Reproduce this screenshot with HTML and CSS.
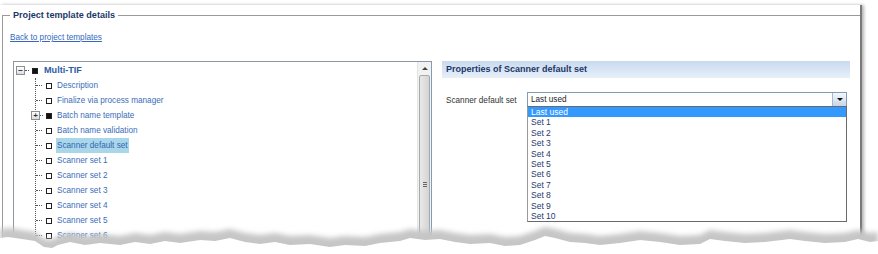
FILE: index.html
```html
<!doctype html>
<html lang="en">
  <head>
    <meta charset="UTF-8" />
    <title>Project template details</title>
    <link rel="stylesheet" href="styles.css">
  </head>
  <body>
    <div class="paper">
      <fieldset class="details">
        <legend>Project template details</legend>
        <a class="back" href="#">Back to project templates</a>

        <div class="main">
          <!-- Tree of template items -->
          <div class="tree-panel">
            <div class="tree">
              <div class="row root">
                <span class="expander">&minus;</span>
                <span class="conn short"></span>
                <span class="sq filled"></span>
                <span class="label bold">Multi-TIF</span>
              </div>
              <div class="children">
                <div class="row"><span class="conn"></span><span class="sq"></span><span class="label">Description</span></div>
                <div class="row"><span class="conn"></span><span class="sq"></span><span class="label">Finalize via process manager</span></div>
                <div class="row"><span class="expander on-line">+</span><span class="conn tiny"></span><span class="sq filled"></span><span class="label">Batch name template</span></div>
                <div class="row"><span class="conn"></span><span class="sq"></span><span class="label">Batch name validation</span></div>
                <div class="row"><span class="conn"></span><span class="sq"></span><span class="label selected">Scanner default set</span></div>
                <div class="row"><span class="conn"></span><span class="sq"></span><span class="label">Scanner set 1</span></div>
                <div class="row"><span class="conn"></span><span class="sq"></span><span class="label">Scanner set 2</span></div>
                <div class="row"><span class="conn"></span><span class="sq"></span><span class="label">Scanner set 3</span></div>
                <div class="row"><span class="conn"></span><span class="sq"></span><span class="label">Scanner set 4</span></div>
                <div class="row"><span class="conn"></span><span class="sq"></span><span class="label">Scanner set 5</span></div>
                <div class="row"><span class="conn"></span><span class="sq"></span><span class="label">Scanner set 6</span></div>
                <div class="row"><span class="conn"></span><span class="sq"></span><span class="label">Scanner set 7</span></div>
              </div>
            </div>
            <div class="scrollbar">
              <div class="sb-btn"><span class="up"></span></div>
              <div class="sb-thumb"><span class="grip"></span></div>
            </div>
          </div>

          <!-- Properties -->
          <div class="props">
            <div class="props-head">Properties of Scanner default set</div>
            <div class="field">
              <span class="field-label">Scanner default set</span>
              <div class="combo">
                <div class="combo-box">
                  <span class="combo-value">Last used</span>
                  <span class="combo-btn"><span class="down"></span></span>
                </div>
                <ul class="combo-list">
                  <li class="active">Last used</li>
                  <li>Set 1</li>
                  <li>Set 2</li>
                  <li>Set 3</li>
                  <li>Set 4</li>
                  <li>Set 5</li>
                  <li>Set 6</li>
                  <li>Set 7</li>
                  <li>Set 8</li>
                  <li>Set 9</li>
                  <li>Set 10</li>
                </ul>
              </div>
            </div>
          </div>
        </div>
      </fieldset>
    </div>

    <!-- torn paper edge -->
    <svg class="tear" width="878" height="34" viewBox="0 0 878 34">
      <defs>
        <filter id="soft" x="-5%" y="-50%" width="110%" height="200%">
          <feGaussianBlur stdDeviation="2.4" />
        </filter>
      </defs>
      <path fill="#c6c6c6" filter="url(#soft)"
        d="M0,9 L10,8 L22,10 L35,12 L44,19 L52,20 L58,16 L70,13 L85,16 L100,14 L120,16 L135,13 L150,15 L165,12 L180,14 L200,11 L215,12 L230,9 L245,13 L260,15 L275,13 L290,16 L310,15 L330,18 L345,16 L365,17 L380,14 L400,12 L410,9 L425,11 L440,10 L455,13 L470,15 L490,14 L505,17 L520,16 L535,11 L545,7 L555,9 L570,13 L585,14 L600,16 L620,14 L640,11 L660,13 L680,16 L700,15 L710,10 L725,12 L745,14 L765,13 L790,10 L805,12 L825,14 L845,13 L858,10 L870,13 L878,12 L878,34 L0,34 Z" />
      <path fill="#ffffff"
        d="M0,18 L8,17 L22,19 L35,21 L44,27 L52,28 L58,25 L70,22 L85,25 L100,23 L120,25 L135,22 L150,24 L165,21 L180,23 L200,20 L215,21 L230,18 L245,22 L260,24 L275,22 L290,25 L310,24 L330,27 L345,25 L365,26 L380,23 L400,21 L410,18 L425,20 L440,19 L455,22 L470,24 L490,23 L505,26 L520,25 L535,20 L545,16 L555,18 L570,22 L585,23 L600,25 L620,23 L640,20 L660,22 L680,25 L700,24 L710,19 L725,21 L745,23 L765,22 L790,19 L805,21 L825,23 L845,22 L858,19 L870,22 L878,21 L878,34 L0,34 Z" />
    </svg>
  </body>
</html>
```

FILE: styles.css
```css
body {
  margin: 0;
  background: #fff;
  font-family: "Liberation Sans", Arial, sans-serif;
  font-size: 8.2px;
  color: #333;
  width: 878px;
  height: 254px;
  overflow: hidden;
  position: relative;
}
.paper {
  width: 860px;
  height: 260px;
  margin-top: 5px;
  background: #fff;
  border-right: 2px solid #7a7a7a;
  box-shadow: 2px 0 3px rgba(0, 0, 0, 0.3);
}
.details {
  margin: 0 0 0 2px;
  padding: 0 0 0 7px;
  border: none;
  border-top: 1px solid #9a9a9a;
  border-left: 1px solid #9a9a9a;
  height: 100%;
  box-sizing: border-box;
}
.details legend {
  padding: 0 3px;
  font-size: 9.1px;
  font-weight: bold;
  line-height: 20px;
  color: #1b3767;
}
.back {
  display: block;
  margin-top: 7px;
  line-height: 12px;
  color: #3568c0;
  text-decoration: underline;
  width: max-content;
}
.main {
  display: flex;
  gap: 10px;
  margin-top: 17px;
  margin-left: 3px;
}

/* tree panel */
.tree-panel {
  width: 417px;
  height: 200px;
  display: flex;
  border: 1px solid #8c96a6;
  border-right-color: #7f9db9;
  background: #fff;
}
.tree {
  flex: 1;
  padding: 1px 0 0 2px;
}
.row {
  display: flex;
  align-items: center;
  height: 15px;
}
.expander {
  width: 7px;
  height: 7px;
  border: 1px solid #8e8f8f;
  background: linear-gradient(#ffffff, #d8dde6);
  font-size: 8px;
  line-height: 7px;
  text-align: center;
  color: #333;
  font-weight: bold;
}
.expander.on-line {
  margin-left: -5px;
}
.conn {
  width: 6px;
  border-top: 1px dotted #555;
  margin-right: 4px;
}
.conn.short {
  width: 4px;
  margin-right: 3px;
}
.conn.tiny {
  width: 3px;
  margin-right: 3px;
}
.sq {
  width: 4px;
  height: 4px;
  border: 1px solid #222;
  background: #fff;
  margin-right: 5px;
}
.sq.filled {
  background: #111;
}
.root .sq {
  margin-right: 6px;
}
.label {
  color: #3c6db8;
  line-height: 15px;
  padding: 0 1px;
  margin-left: -1px;
}
.label.bold {
  font-weight: bold;
  font-size: 9.1px;
  color: #2d5aa6;
}
.label.selected {
  background: #a9d6e9;
  color: #3366b4;
}
.children {
  margin-left: 19px;
  border-left: 1px dotted #555;
}

/* scrollbar */
.scrollbar {
  width: 13px;
  display: flex;
  flex-direction: column;
  background: #f2f2f2;
  border-left: 1px solid #e4e4e4;
}
.sb-btn {
  height: 13px;
  display: flex;
  align-items: center;
  justify-content: center;
}
.up {
  width: 0;
  height: 0;
  border-left: 3px solid transparent;
  border-right: 3px solid transparent;
  border-bottom: 3px solid #444;
}
.sb-thumb {
  flex: 1;
  margin: 0 1px;
  border: 1px solid #a9a9a9;
  border-radius: 2px;
  background: linear-gradient(to right, #e9e9e9, #d4d4d4);
  position: relative;
}
.grip {
  position: absolute;
  left: 3px;
  top: 106px;
  width: 4px;
  height: 5px;
  background: repeating-linear-gradient(#666 0 1px, transparent 1px 2px);
}

/* properties */
.props {
  width: 408px;
}
.props-head {
  height: 17px;
  line-height: 17px;
  padding-left: 4px;
  background: linear-gradient(#c9d9ee, #e7f0fa);
  font-weight: bold;
  font-size: 9px;
  color: #1b3767;
}
.field {
  display: flex;
  align-items: flex-start;
  margin-top: 14px;
  padding-left: 4px;
}
.field-label {
  width: 81px;
  line-height: 18px;
  color: #333;
}
.combo {
  position: relative;
  width: 320px;
}
.combo-box {
  display: flex;
  height: 13px;
  border: 1px solid #7f9db9;
  background: #fff;
}
.combo-value {
  flex: 1;
  padding-left: 3px;
  line-height: 13px;
  color: #222;
}
.combo-btn {
  width: 13px;
  display: flex;
  align-items: center;
  justify-content: center;
  background: linear-gradient(#f4f7fb, #c9d6e6);
  border-left: 1px solid #a7b9cf;
}
.down {
  width: 0;
  height: 0;
  border-left: 3px solid transparent;
  border-right: 3px solid transparent;
  border-top: 3px solid #111;
}
.combo-list {
  position: absolute;
  top: 14px;
  left: 0;
  width: 318px;
  margin: 0;
  padding: 0;
  list-style: none;
  background: #fff;
  border: 1px solid #6a6a6a;
  border-left-color: #9a9a9a;
}
.combo-list li {
  height: 10.4px;
  line-height: 10.4px;
  padding-left: 3px;
  font-size: 8.5px;
  color: #1f3a6e;
}
.combo-list li.active {
  background: #3399ff;
  color: #fff;
}

.tear {
  position: absolute;
  left: 0;
  top: 220px;
}
```
